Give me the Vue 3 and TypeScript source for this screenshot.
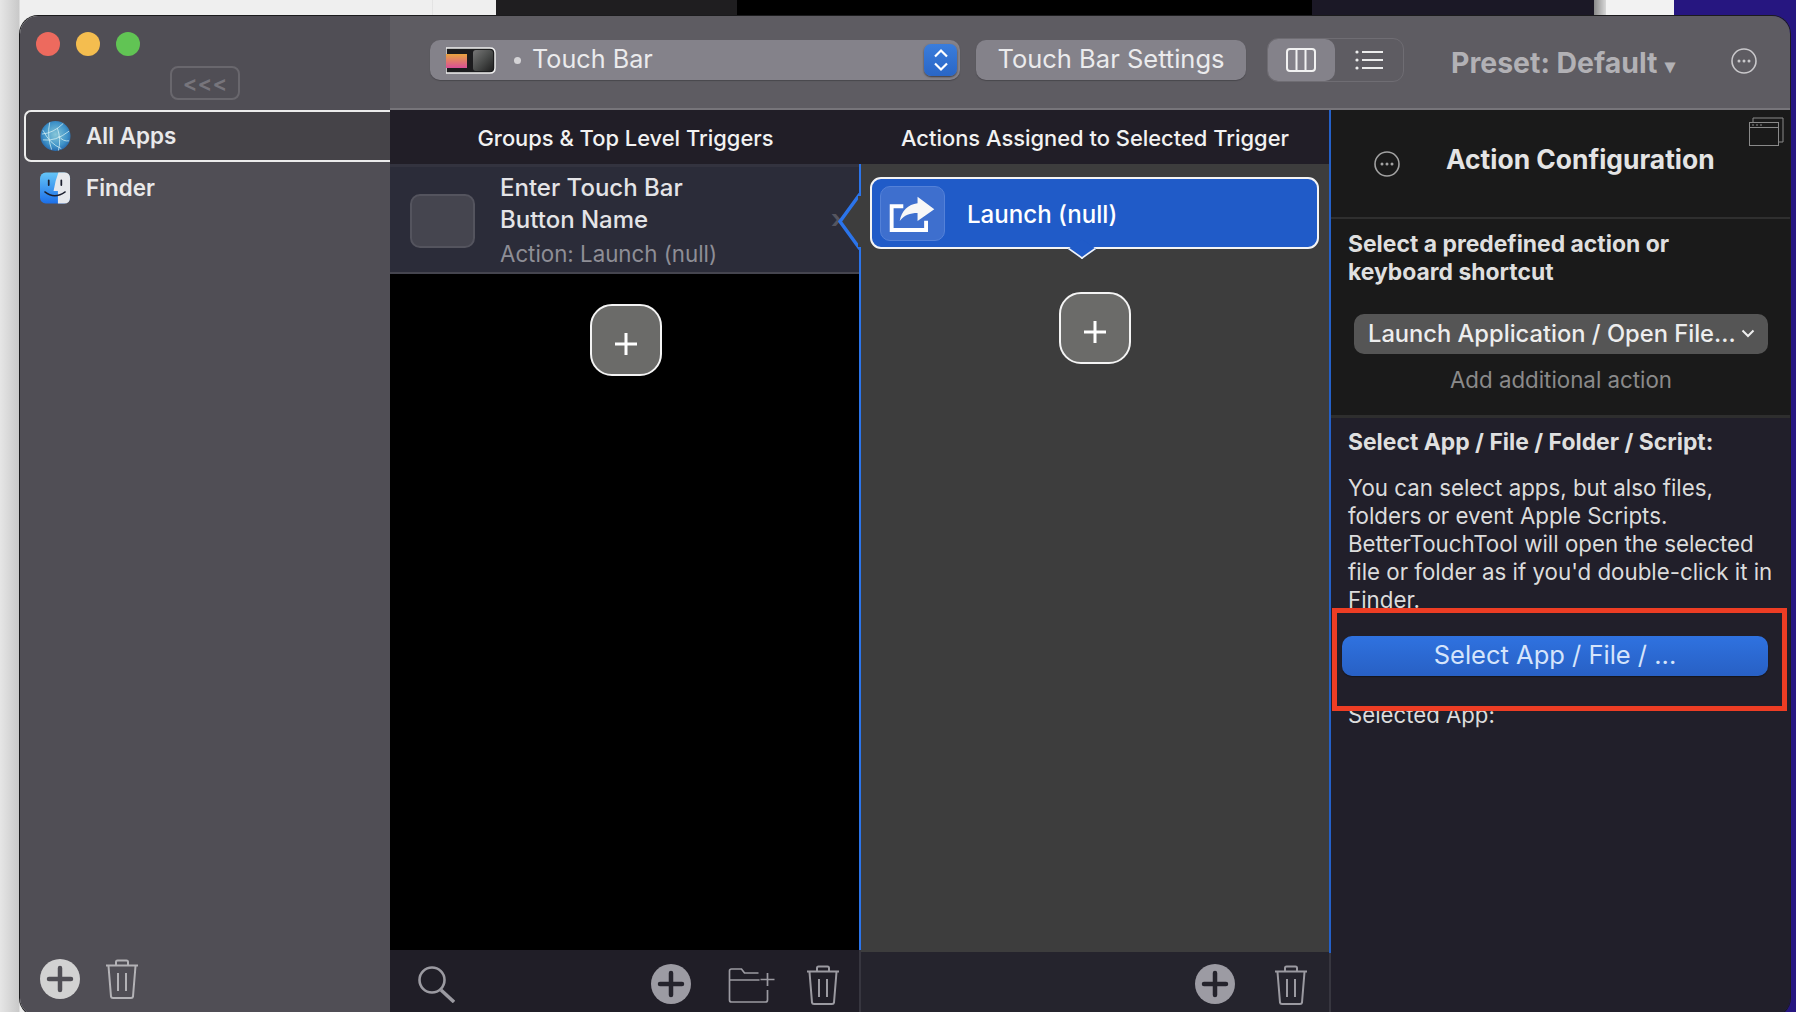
<script setup lang="ts">
const lines = [
  "You can select apps, but also files,",
  "folders or event Apple Scripts.",
  "BetterTouchTool will open the selected",
  "file or folder as if you'd double-click it in",
  "Finder.",
]
</script>

<template>
  <div class="desk">
    <svg class="defs" width="0" height="0">
      <symbol id="trash" viewBox="0 0 34 40">
        <path d="M1 6.500H33M3.500 7L6 37.500Q6.200 39 8 39H26Q27.800 39 28 37.500L30.500 7M11 6V3Q11 1.500 12.500 1.500H21.500Q23 1.500 23 3V6M13 14V32M21 14V32" fill="none" stroke="currentColor" stroke-width="2" />
      </symbol>
      <symbol id="add" viewBox="0 0 40 40">
        <circle cx="20" cy="20" r="20" fill="currentColor" />
        <path d="M20 9V31M9 20H31" stroke="var(--cut)" stroke-width="4.500" stroke-linecap="round" />
      </symbol>
      <symbol id="more" viewBox="0 0 26 26">
        <circle cx="13" cy="13" r="12" fill="none" stroke="currentColor" stroke-width="1.600" />
        <circle cx="8" cy="13" r="1.500" fill="currentColor" />
        <circle cx="13" cy="13" r="1.500" fill="currentColor" />
        <circle cx="18" cy="13" r="1.500" fill="currentColor" />
      </symbol>
      <symbol id="plus" viewBox="0 0 22 22">
        <path d="M11 0V22M0 11H22" stroke="#fff" stroke-width="3" />
      </symbol>
    </svg>

    <div class="window">
      <aside class="sidebar">
        <div class="lights">
          <span class="light red"></span>
          <span class="light yellow"></span>
          <span class="light green"></span>
        </div>
        <div class="collapse">&lt;&lt;&lt;</div>

        <div class="app active">
          <svg class="app-icon" viewBox="0 0 32 32">
            <defs>
              <radialGradient id="globe" cx="0.5" cy="0.45" r="0.6">
                <stop offset="0" stop-color="#86c6d8" />
                <stop offset="0.65" stop-color="#3f93c8" />
                <stop offset="1" stop-color="#1f5ea6" />
              </radialGradient>
            </defs>
            <circle cx="16" cy="16" r="15.500" fill="url(#globe)" />
            <path d="M2 14Q14 13 24 3M3 10Q10 24 22 29M10 2Q7 16 12 30M3 20Q16 22 30 11M18 8Q22 20 19 31M19 16Q24 22 30 21" fill="none" stroke="#dff6f8" stroke-width="0.900" opacity="0.8" />
          </svg>
          <span>All Apps</span>
        </div>
        <div class="app">
          <svg class="app-icon" viewBox="0 0 32 32">
            <defs>
              <linearGradient id="finderBlue" x1="0" y1="0" x2="0" y2="1">
                <stop offset="0" stop-color="#65c5f7" />
                <stop offset="1" stop-color="#1c6fe8" />
              </linearGradient>
            </defs>
            <rect width="31" height="32" rx="6" fill="url(#finderBlue)" />
            <path d="M25 0H19Q15.500 9 14 19H18.500V32H25Q31 32 31 26V6Q31 0 25 0Z" fill="#e6e8ec" />
            <path d="M9 8V13M22 8V13" stroke="#1b1f2e" stroke-width="1.800" stroke-linecap="round" />
            <path d="M5 20Q15 28 26 20" fill="none" stroke="#1b1f2e" stroke-width="1.400" stroke-linecap="round" />
          </svg>
          <span>Finder</span>
        </div>

        <div class="side-foot">
          <svg class="add light-add"><use href="#add" /></svg>
          <svg class="trash side-trash"><use href="#trash" /></svg>
        </div>
      </aside>

      <main class="main">
        <header class="toolbar">
          <div class="popup">
            <svg class="tb-thumb" viewBox="0 0 50 27">
              <defs>
                <linearGradient id="sunset" x1="0" y1="0" x2="0" y2="1">
                  <stop offset="0" stop-color="#e8a33f" />
                  <stop offset="1" stop-color="#d94f97" />
                </linearGradient>
                <linearGradient id="sheen" x1="0" y1="0" x2="1" y2="1">
                  <stop offset="0" stop-color="#777" />
                  <stop offset="0.5" stop-color="#4b4d4c" />
                  <stop offset="1" stop-color="#1f1f1f" />
                </linearGradient>
              </defs>
              <path d="M0 1H44Q49 1 49 6V21Q49 26 44 26H0Z" fill="#1c1c1e" stroke="#f0f0f0" stroke-width="1.500" />
              <rect x="0" y="7" width="21" height="14" fill="url(#sunset)" />
              <rect x="27" y="3" width="20" height="21" rx="3" fill="url(#sheen)" />
            </svg>
            <span class="popup-dot"></span>
            <span class="popup-text">Touch Bar</span>
            <span class="stepper">
              <svg width="16" height="24" viewBox="0 0 16 24">
                <path d="M2 8.500L8 2.500L14 8.500M2 15.500L8 21.500L14 15.500" fill="none" stroke="#fff" stroke-width="2.200" />
              </svg>
            </span>
          </div>
          <div class="tb-button">Touch Bar Settings</div>
          <div class="segment">
            <span class="seg seg-on">
              <svg width="30" height="24" viewBox="0 0 30 24">
                <rect x="1" y="1" width="28" height="22" rx="3" fill="none" stroke="#f2f2f2" stroke-width="2" />
                <path d="M10.500 1V23M19.500 1V23" stroke="#f2f2f2" stroke-width="2" />
              </svg>
            </span>
            <span class="seg">
              <svg width="28" height="20" viewBox="0 0 28 20">
                <path d="M7 2H28M7 10H28M7 18H28" stroke="#ececec" stroke-width="1.800" />
                <circle cx="2" cy="2" r="1.600" fill="#ececec" />
                <circle cx="2" cy="10" r="1.600" fill="#ececec" />
                <circle cx="2" cy="18" r="1.600" fill="#ececec" />
              </svg>
            </span>
          </div>
          <div class="preset">Preset: Default<span class="caret">▾</span></div>
          <svg class="more top-more"><use href="#more" /></svg>
        </header>

        <div class="content">
          <section class="col col-one">
            <div class="col-head">Groups &amp; Top Level Triggers</div>
            <div class="col-body one-body">
              <div class="trigger">
                <span class="trigger-icon"></span>
                <div class="trigger-text">
                  <div class="trigger-name">Enter Touch Bar</div>
                  <div class="trigger-name">Button Name</div>
                  <div class="trigger-sub">Action: Launch (null)</div>
                </div>
                <span class="chev">›</span>
                <svg class="notch" width="24" height="58" viewBox="0 0 24 58">
                  <path d="M23 1L3 28.500L23 56" fill="#3d3d3d" stroke="#2b74ea" stroke-width="3.500" />
                  <rect x="21" y="3" width="3" height="51" fill="#3d3d3d" />
                </svg>
              </div>
              <div class="plus-wrap one-plus">
                <button class="plus"><svg class="plus-mark"><use href="#plus" /></svg></button>
              </div>
            </div>
            <div class="col-foot one-foot">
              <svg class="search" viewBox="0 0 38 37">
                <circle cx="15" cy="14" r="12.500" fill="none" stroke="#9b9aa1" stroke-width="2.600" />
                <path d="M24 24L37 36" stroke="#9b9aa1" stroke-width="3.500" />
              </svg>
              <svg class="add dim-add foot-add"><use href="#add" /></svg>
              <svg class="folder" viewBox="0 0 46 35">
                <path d="M30 5H16L13 1H3Q1 1 1 3V32Q1 34 3 34H37Q39 34 39 32V22M1 12H31" fill="none" stroke="#9b9aa1" stroke-width="1.700" />
                <path d="M39 5V18M32 11.500H46" stroke="#9b9aa1" stroke-width="1.700" />
              </svg>
              <svg class="trash foot-trash"><use href="#trash" /></svg>
            </div>
          </section>

          <section class="col col-two">
            <div class="col-head">Actions Assigned to Selected Trigger</div>
            <div class="col-body two-body">
              <div class="action-card">
                <span class="action-icon">
                  <svg width="65" height="55" viewBox="0 0 65 55">
                    <path d="M23 19H11V43.500H46.500V34" fill="none" stroke="#fff" stroke-width="4" />
                    <path d="M55 22L37.700 9.300V16C28 17 21 24 19.300 34.300C24 28 30 26 37.700 26V34.300Z" fill="#f7f7f7" />
                  </svg>
                </span>
                <span class="action-name">Launch (null)</span>
                <span class="tail"></span>
              </div>
              <div class="plus-wrap two-plus">
                <button class="plus"><svg class="plus-mark"><use href="#plus" /></svg></button>
              </div>
            </div>
            <div class="col-foot two-foot">
              <svg class="add dim-add"><use href="#add" /></svg>
              <svg class="trash foot-trash two-trash"><use href="#trash" /></svg>
            </div>
          </section>

          <section class="panel">
            <div class="panel-head">
              <svg class="more head-more"><use href="#more" /></svg>
              <h2>Action Configuration</h2>
              <svg class="win-icon" width="35" height="29" viewBox="0 0 35 29">
                <path d="M4 5V1H34V25H30" fill="none" stroke="#8a8a8a" stroke-width="1" />
                <rect x="0.500" y="5.500" width="29" height="23" fill="#1a1a1a" stroke="#8a8a8a" />
                <path d="M0.500 10.500H29.500" stroke="#8a8a8a" />
                <path d="M3 8H5M7 8H9M11 8H13" stroke="#8a8a8a" />
              </svg>
            </div>

            <div class="panel-pick">
              <p class="label">Select a predefined action or<br>keyboard shortcut</p>
              <div class="select">
                <span>Launch Application / Open File...</span>
                <svg width="14" height="9" viewBox="0 0 14 9">
                  <path d="M1.500 1.500L7 7L12.500 1.500" fill="none" stroke="#eee" stroke-width="2" />
                </svg>
              </div>
              <div class="add-more">Add additional action</div>
            </div>

            <div class="panel-file">
              <p class="label">Select App / File / Folder / Script:</p>
              <p class="desc">
                <template v-for="line in lines" :key="line">{{ line }}<br></template>
              </p>
              <div class="select-btn">Select App / File / ...</div>
              <p class="selected">Selected App:</p>
              <div class="highlight"></div>
            </div>
          </section>
        </div>
      </main>
    </div>
  </div>
</template>

<style>
html,
body {
  margin: 0;
  background: #2a1a80;
}
</style>

<style scoped>
.desk {
  --cut: #504e55;
  width: 1796px;
  height: 1012px;
  overflow: hidden;
  font-family: Inter, "Liberation Sans", sans-serif;
  background: linear-gradient(90deg, #e6e6e6 0, #c9c9c9 19px, #efefef 20px, #efefef 432px, #d8d8d8 432px, #efefef 433px, #efefef 496px, #1f1e20 496px, #1f1e20 737px, #000 737px, #000 1312px, #1b1826 1312px, #1b1826 1594px, #8a8a8a 1594px, #d8d8d8 1606px, #f2f2f2 1606px, #f2f2f2 1674px, #261680 1674px);
}

.defs {
  position: absolute;
}

.window {
  display: flex;
  box-sizing: border-box;
  width: 1770px;
  height: 1000px;
  margin: 16px 0 0 20px;
  border-radius: 18px;
  overflow: hidden;
  box-shadow: 0 0 0 1px #1b1b1d;
}

.sidebar {
  display: flex;
  flex-direction: column;
  flex: 0 0 370px;
  background: #504e55;
}

.lights {
  display: flex;
  gap: 16px;
  padding: 16px 0 0 16px;
}

.light {
  width: 24px;
  height: 24px;
  border-radius: 50%;
}

.red { background: #ed6a5e; }
.yellow { background: #f4bd4f; }
.green { background: #61c454; }

.collapse {
  box-sizing: border-box;
  width: 70px;
  height: 34px;
  margin: 10px 0 0 150px;
  border: 2px solid #69676d;
  border-radius: 8px;
  color: #77757c;
  font-size: 22px;
  font-weight: 600;
  line-height: 31px;
  text-align: center;
}

.app {
  display: flex;
  align-items: center;
  gap: 15px;
  box-sizing: border-box;
  height: 52px;
  margin-left: 5px;
  padding-left: 15px;
  color: #e9e9ea;
  font-size: 22.400px;
  font-weight: 600;
  line-height: 26px;
}

.app.active {
  margin-left: 4px;
  margin-top: 10px;
  padding-left: 14px;
  background: #454348;
  border: 2px solid #ececec;
  border-right: 0;
  border-radius: 7px 0 0 7px;
}

.app-icon {
  width: 31px;
  height: 32px;
}

.side-foot {
  display: flex;
  align-items: center;
  gap: 25px;
  margin-top: auto;
  padding: 0 0 17px 20px;
}

.add {
  width: 40px;
  height: 40px;
}

.light-add { color: #d2d2d2; }

.dim-add {
  --cut: #24232c;
  color: #9c9ba3;
}

.trash {
  width: 34px;
  height: 40px;
}

.side-trash { color: #b3b2b6; }

.main {
  display: flex;
  flex-direction: column;
  flex: 1;
  min-width: 0;
}

.toolbar {
  display: flex;
  align-items: center;
  box-sizing: border-box;
  height: 94px;
  padding: 0 33px 4px 40px;
  background: #5e5c62;
  border-bottom: 2px solid #77757a;
}

.popup {
  display: flex;
  align-items: center;
  box-sizing: border-box;
  width: 530px;
  height: 40px;
  padding: 0 3px 0 16px;
  border-radius: 10px;
  background: #84828a;
  box-shadow: 0 1px 1px #49474d;
}

.tb-thumb {
  width: 50px;
  height: 27px;
}

.popup-dot {
  width: 7px;
  height: 7px;
  margin: 0 11px 0 18px;
  border-radius: 50%;
  background: #d4d3d6;
}

.popup-text {
  flex: 1;
  margin-top: -2px;
  color: #ebebed;
  font-size: 25.200px;
}

.stepper {
  display: flex;
  align-items: center;
  justify-content: center;
  width: 33px;
  height: 32px;
  border-radius: 7px;
  background: linear-gradient(#3a7ddc, #2a66c6);
  box-shadow: 0 1px 2px #3a383e;
}

.tb-button {
  box-sizing: border-box;
  width: 270px;
  height: 40px;
  margin-left: 16px;
  border-radius: 10px;
  background: #84828a;
  box-shadow: 0 1px 1px #49474d;
  color: #ebebed;
  font-size: 25.500px;
  line-height: 37px;
  text-align: center;
}

.segment {
  display: flex;
  box-sizing: border-box;
  width: 137px;
  height: 44px;
  margin-left: 21px;
  border: 1px solid #6f6d73;
  border-radius: 11px;
}

.seg {
  display: flex;
  align-items: center;
  justify-content: center;
  width: 69px;
}

.seg-on {
  width: 67px;
  border-radius: 10px;
  background: #84828a;
}

.preset {
  margin-left: 47px;
  margin-top: 4px;
  color: #b2b1b5;
  font-size: 28.400px;
  font-weight: 700;
  white-space: nowrap;
}

.caret {
  margin-left: 8px;
  font-size: 20px;
}

.more {
  width: 26px;
  height: 26px;
}

.top-more {
  margin: 2px 0 0 auto;
  color: #c9c8cb;
}

.content {
  display: flex;
  flex: 1;
  min-height: 0;
}

.col {
  display: flex;
  flex-direction: column;
  width: 470px;
}

.col-one { width: 471px; }

.col-two { width: 468px; }

.col-head {
  box-sizing: border-box;
  flex: 0 0 54px;
  padding-top: 2px;
  background: #211e27;
  color: #f2f2f2;
  font-size: 21.900px;
  font-weight: 500;
  line-height: 52px;
  text-align: center;
}

.col-body {
  display: flex;
  flex-direction: column;
  flex: 1;
}

.one-body {
  background: #000;
  border-right: 2px solid #2b74ea;
}

.two-body { background: #3d3d3d; }

.col-foot {
  display: flex;
  align-items: flex-start;
  box-sizing: border-box;
}

.one-foot {
  height: 66px;
  padding: 14px 0 0 27px;
  background: #201e27;
  border-right: 2px solid #37363f;
}

.two-foot {
  height: 64px;
  padding: 12px 21px 0 0;
  justify-content: flex-end;
  background: #25242d;
}

.trigger {
  display: flex;
  align-items: center;
  position: relative;
  box-sizing: border-box;
  height: 110px;
  padding-left: 20px;
  background: #2b2c39;
  border-top: 3px solid #33333f;
  border-bottom: 2px solid #45454f;
}

.trigger-icon {
  box-sizing: border-box;
  flex: 0 0 65px;
  height: 54px;
  margin: 2px 25px 0 0;
  border: 2px solid #54545e;
  border-radius: 10px;
  background: #45454f;
}

.trigger-name {
  color: #e4e4e7;
  font-size: 24px;
  font-weight: 500;
  line-height: 32px;
}

.trigger-sub {
  margin-top: 4px;
  color: #8e8e96;
  font-size: 22.300px;
  line-height: 28px;
  white-space: nowrap;
}

.chev {
  position: absolute;
  right: 17px;
  top: 36px;
  color: #55555f;
  font-size: 26px;
  font-weight: 700;
}

.notch {
  position: absolute;
  right: -2px;
  top: 26px;
}

.plus-wrap {
  display: flex;
  justify-content: center;
  padding: 30px 0 0 0;
}

.one-plus { padding-left: 2px; }

.two-plus { padding-top: 43px; }

.plus {
  display: flex;
  align-items: center;
  justify-content: center;
  box-sizing: border-box;
  width: 72px;
  height: 72px;
  padding: 8px 0 0;
  border: 2.500px solid #f4f4f4;
  border-radius: 22px;
  background: #6b6b69;
}

.plus-mark {
  width: 22px;
  height: 22px;
}

.action-card {
  display: flex;
  align-items: center;
  position: relative;
  box-sizing: border-box;
  height: 72px;
  margin: 13px 10px 0 9px;
  padding-left: 8px;
  border: 2px solid #f4f4f4;
  border-radius: 11px;
  background: #205bc8;
}

.action-icon {
  display: flex;
  width: 65px;
  height: 55px;
  border: 1px solid #5481d8;
  border-radius: 10px;
  background: #3e6fce;
  box-sizing: border-box;
}

.action-name {
  margin: 3px 0 0 22px;
  color: #fff;
  font-size: 24.100px;
  font-weight: 500;
}

.tail {
  position: absolute;
  left: 200px;
  bottom: -12px;
  width: 18px;
  height: 18px;
  border-right: 2px solid #f4f4f4;
  border-bottom: 2px solid #f4f4f4;
  background: #205bc8;
  transform: scaleY(0.7) rotate(45deg);
}

.search {
  width: 38px;
  height: 37px;
  margin-top: 2px;
}

.folder {
  width: 47px;
  height: 35px;
  margin: 4px 31px 0 37px;
}

.foot-add { margin-left: 196px; }

.foot-trash {
  color: #9b9aa1;
  margin-top: 1px;
}

.two-trash { margin-left: 39px; }

.panel {
  display: flex;
  flex-direction: column;
  flex: 1;
  min-width: 0;
  border-left: 2px solid;
  border-image: linear-gradient(#2460c8 842px, #37363f 842px) 1;
  background: #211f2a;
}

.panel-head {
  display: flex;
  align-items: center;
  position: relative;
  box-sizing: border-box;
  height: 109px;
  padding-left: 43px;
  background: #1a1a1a;
  border-bottom: 2px solid #2f2f2f;
}

.panel-head h2 {
  margin: 0 0 10px 46px;
  color: #e4e4e4;
  font-size: 26.400px;
  font-weight: 700;
}

.head-more { color: #a2a2a2; }

.win-icon {
  position: absolute;
  right: 6px;
  top: 7px;
}

.panel-pick {
  box-sizing: border-box;
  height: 199px;
  padding-top: 11px;
  background: #1a1a1a;
  border-bottom: 3px solid #2e2e2e;
}

.label {
  margin: 0;
  padding-left: 17px;
  color: #dfdfdf;
  font-size: 22.900px;
  font-weight: 700;
  line-height: 28px;
  white-space: nowrap;
}

.select {
  display: flex;
  align-items: center;
  justify-content: space-between;
  box-sizing: border-box;
  width: 414px;
  height: 40px;
  margin: 28px 0 0 23px;
  padding: 0 13px 2px 14px;
  border-radius: 10px;
  background: #555;
  color: #ededed;
  font-size: 23.700px;
  font-weight: 500;
  white-space: nowrap;
}

.add-more {
  width: 414px;
  margin: 12px 0 0 23px;
  color: #8a8a8a;
  font-size: 22.300px;
  line-height: 28px;
  text-align: center;
}

.panel-file {
  position: relative;
  flex: 1;
  padding-top: 10px;
}

.desc {
  margin: 18px 0 0;
  padding-left: 17px;
  color: #dcdcdc;
  font-size: 22.300px;
  line-height: 28px;
  white-space: nowrap;
}

.select-btn {
  width: 426px;
  height: 40px;
  margin: 22px 0 0 11px;
  border-radius: 10px;
  background: linear-gradient(#2f72e0, #2860c4);
  box-shadow: 0 1px 1px #15141b;
  color: #d5e4fb;
  font-size: 25.500px;
  line-height: 38px;
  text-align: center;
}

.selected {
  margin: 25px 0 0;
  padding-left: 17px;
  color: #dcdcdc;
  font-size: 22.200px;
  line-height: 28px;
}

.highlight {
  position: absolute;
  left: 1px;
  top: 190px;
  box-sizing: border-box;
  width: 455px;
  height: 103px;
  border: 5px solid #ee3d24;
}
</style>
